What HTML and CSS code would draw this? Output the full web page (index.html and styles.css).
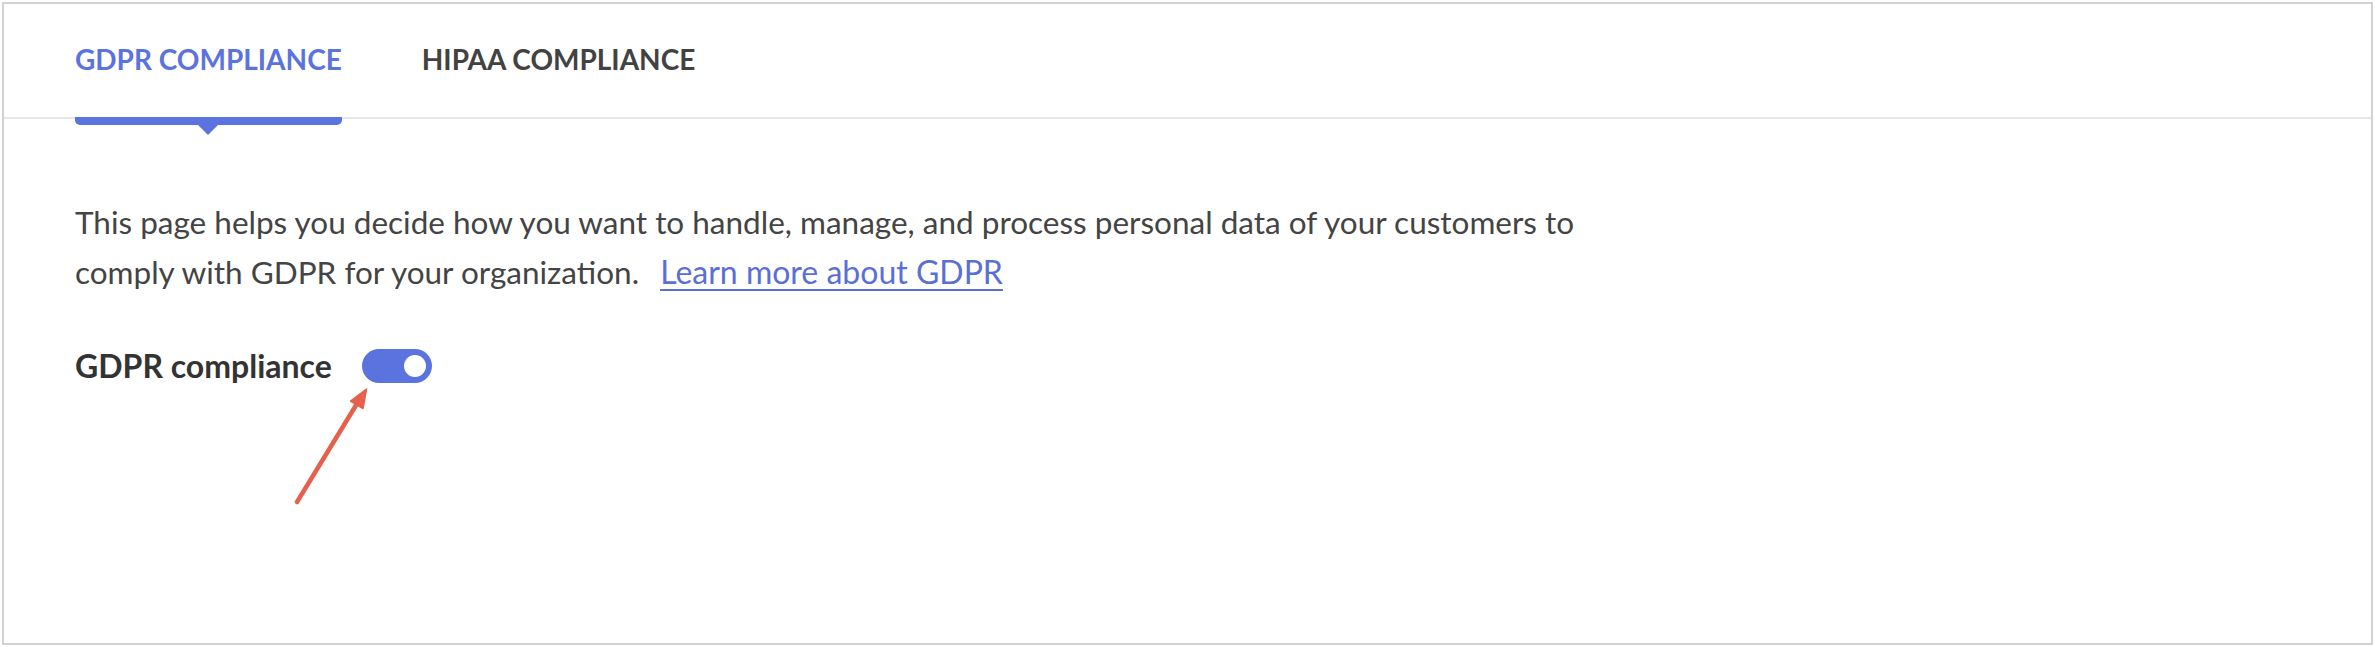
FILE: index.html
```html
<!DOCTYPE html>
<html lang="en">
<head>
<meta charset="utf-8">
<title>Compliance</title>
<link rel="stylesheet" href="styles.css">
</head>
<body>
<div class="panel">
  <nav class="tabs">
    <div class="tab tab-active">GDPR COMPLIANCE<span class="indicator"></span></div>
    <div class="tab">HIPAA COMPLIANCE</div>
  </nav>
  <section class="content">
    <p class="intro">This page helps you decide how you want to handle, manage, and process personal data of your customers to comply with GDPR for your organization. <a class="link" href="#">Learn more about GDPR</a></p>
    <div class="setting">
      <span class="setting-label">GDPR compliance</span>
      <span class="toggle"><span class="knob"></span></span>
    </div>
  </section>
  <svg class="arrow" width="100" height="130" viewBox="0 0 100 130" aria-hidden="true">
    <line x1="17" y1="122" x2="78" y2="22" stroke="#e6604d" stroke-width="4.5" stroke-linecap="round"/>
    <polygon points="86.5,9 83,28.5 70.5,21" fill="#e6604d" stroke="#e6604d" stroke-width="1.5" stroke-linejoin="round"/>
  </svg>
</div>
</body>
</html>
```
FILE: styles.css
```css
* { box-sizing: border-box; }
html, body { margin: 0; padding: 0; background: #ffffff; }
body { font-family: Lato, "Open Sans", Arial, sans-serif; }

.panel {
  position: relative;
  margin: 2px;
  height: 643px;
  border: 2px solid #d2d2d2;
  background: #fff;
}

.tabs {
  display: flex;
  gap: 80px;
  padding-left: 71px;
  border-bottom: 2px solid #e6e6ec;
}

.tab {
  position: relative;
  padding: 38px 0 41px;
  font-size: 28px;
  line-height: 34px;
  font-weight: 700;
  color: #424242;
}

.tab-active { color: #5b73df; }

.indicator {
  position: absolute;
  left: 0;
  right: 0;
  top: 100%;
  height: 8px;
  background: #5b73df;
  border-radius: 0 0 5px 5px;
}

.indicator::after {
  content: "";
  position: absolute;
  left: 50%;
  top: 8px;
  margin-left: -10px;
  border-left: 10px solid transparent;
  border-right: 10px solid transparent;
  border-top: 10px solid #5b73df;
}

.content { padding-left: 71px; }

.intro {
  margin: 78px 0 0;
  width: 1560px;
  font-size: 31.5px;
  line-height: 50px;
  color: #444444;
}

.link {
  margin-left: 13px;
  font-size: 32px;
  color: #5a6fd6;
  text-decoration: underline;
  text-decoration-thickness: 2px;
  text-underline-offset: 5px;
}

.setting {
  display: flex;
  align-items: center;
  gap: 30px;
  margin-top: 44px;
  height: 50px;
}

.setting-label {
  font-size: 32px;
  line-height: 50px;
  font-weight: 700;
  color: #333333;
}

.toggle {
  display: flex;
  justify-content: flex-end;
  align-items: center;
  width: 70px;
  height: 34px;
  padding: 6px;
  border-radius: 17px;
  background: #5b73df;
}

.knob {
  width: 22px;
  height: 22px;
  border-radius: 50%;
  background: #ffffff;
}

.arrow {
  position: absolute;
  left: 276px;
  top: 376px;
}
```
